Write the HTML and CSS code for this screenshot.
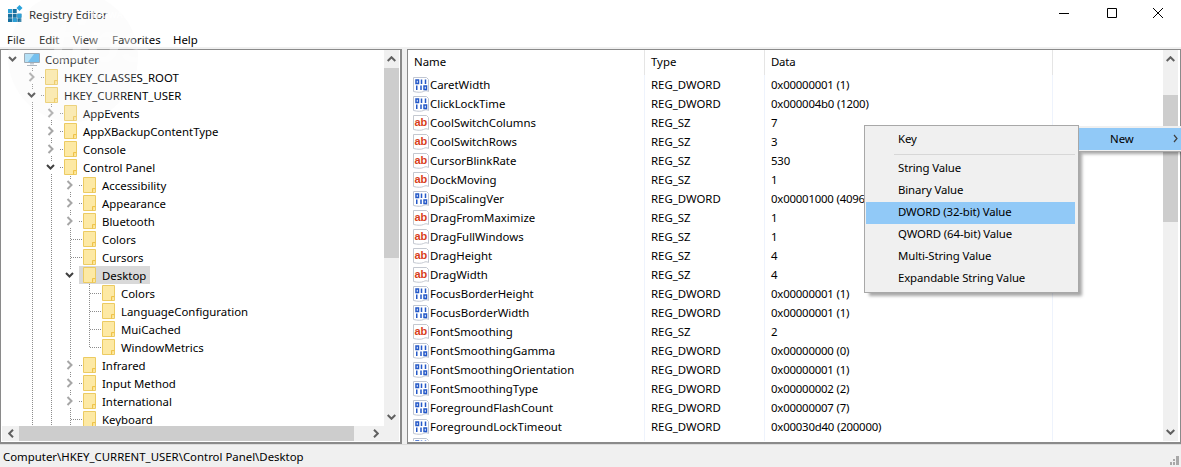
FILE: index.html
```html
<!DOCTYPE html>
<html lang="en">
<head>
<meta charset="utf-8">
<title>Registry Editor</title>
<link rel="stylesheet" href="styles.css">
</head>
<body>
<svg class="defs" width="0" height="0" aria-hidden="true">
  <symbol id="open" viewBox="0 0 15 12"><path d="M4 4l3.500 3.500L11 4" fill="none" stroke="#404040" stroke-width="2"/></symbol>
  <symbol id="closed" viewBox="0 0 15 12"><path d="M5.500 2l4 4-4 4" fill="none" stroke="#a6a6a6" stroke-width="2"/></symbol>
  <symbol id="folder" viewBox="0 0 13 16"><path d="M.5.500h12v15H.5z" fill="#fde9a4" stroke="#eccb62"/><path d="M9.500 15.500v-4h3" fill="#fde08a" stroke="#eec34a"/></symbol>
  <symbol id="dword" viewBox="0 0 16 16"><path d="M.5 .5h13l2 2v12c-2-1-3-1-5 0s-6 1-10 0z" fill="#fff" stroke="#c0c6d2"/><g fill="none" stroke="#2458c8" stroke-width="1.500"><path d="M3 3h2.500v3.500H3zM11 9h2.500v3.500H11z"/><path d="M8.500 2.500v4.500M12.500 2.500v4.500M3.750 8.500v4.500M8 8.500v4.500"/></g></symbol>
  <symbol id="sz" viewBox="0 0 16 16"><path d="M.5 .5h13l2 2v12c-2-1-3-1-5 0s-6 1-10 0z" fill="#fff" stroke="#c4c8d0"/><text x="1.500" y="11" class="ab">ab</text></symbol>
</svg>

<div class="window">
  <header class="titlebar">
    <svg class="appicon" width="15" height="17" viewBox="0 0 15 17"><path d="M0 4h4v4H0zM4.700 4h4v4h-4zM0 8.700h4v4H0zM4.700 8.700h4v4h-4zM9.400 8.700h4v4h-4zM0 13.300h4v3.700H0zM4.700 13.300h4v3.700h-4zM9.400 13.300h4v3.700h-4z" fill="#17709f"/><path d="M0 4h4v4H0zM9.400 8.700h4v4h-4zM4.700 13.300h4v3.700h-4z" fill="#2b9fd6"/><path d="M11.500 0l3 3-3 3-3-3z" fill="#2aa3dc"/></svg>
    <span class="title">Registry Editor</span>
    <span class="controls">
      <svg width="46" height="28" viewBox="0 0 46 28"><path d="M16 13.500h10" stroke="#000"/></svg>
      <svg width="46" height="28" viewBox="0 0 46 28"><path d="M18.500 8.500h9v9h-9z" fill="none" stroke="#000"/></svg>
      <svg width="46" height="28" viewBox="0 0 46 28"><path d="M18 8l10 10M28 8L18 18" stroke="#000" fill="none"/></svg>
    </span>
  </header>
  <nav class="menubar"><span class="m-file">File</span><span class="m-edit">Edit</span><span class="m-view">View</span><span class="m-fav">Favorites</span><span>Help</span></nav>

  <main class="panes">
    <section class="pane left">
      <div class="left-top">
        <div class="tree">
          <div class="row"><span class="exp"><svg class="chev"><use href="#open"/></svg></span><span class="node root"><svg class="pc" width="16" height="13" viewBox="0 0 16 13"><path d="M.5.500h15v9H.5z" fill="#e8f4fc" stroke="#8a9aa8"/><path d="M1 1h14v8H1z" fill="#57b5ee"/><path d="M1 1h9L4 9H1z" fill="#a5dcf8"/><path d="M6 10h4v1.500H6z" fill="#b8c2cc"/><path d="M3 12h10v1H3z" fill="#9aa6b2"/></svg><span>Computer</span></span></div>

          <div class="row"><span class="ind"></span><span class="exp line"><svg class="chev"><use href="#closed"/></svg></span><span class="node"><svg class="fd"><use href="#folder"/></svg><span>HKEY_CLASSES_ROOT</span></span></div>
          <div class="row"><span class="ind"></span><span class="exp line"><svg class="chev"><use href="#open"/></svg></span><span class="node"><svg class="fd"><use href="#folder"/></svg><span>HKEY_CURRENT_USER</span></span></div>

          <div class="row"><span class="ind"></span><span class="ind line"></span><span class="exp line"><svg class="chev"><use href="#closed"/></svg></span><span class="node"><svg class="fd"><use href="#folder"/></svg><span>AppEvents</span></span></div>
          <div class="row"><span class="ind"></span><span class="ind line"></span><span class="exp line"><svg class="chev"><use href="#closed"/></svg></span><span class="node"><svg class="fd"><use href="#folder"/></svg><span>AppXBackupContentType</span></span></div>
          <div class="row"><span class="ind"></span><span class="ind line"></span><span class="exp line"><svg class="chev"><use href="#closed"/></svg></span><span class="node"><svg class="fd"><use href="#folder"/></svg><span>Console</span></span></div>
          <div class="row"><span class="ind"></span><span class="ind line"></span><span class="exp line"><svg class="chev"><use href="#open"/></svg></span><span class="node"><svg class="fd"><use href="#folder"/></svg><span>Control Panel</span></span></div>

          <div class="row"><span class="ind"></span><span class="ind line"></span><span class="ind line"></span><span class="exp line"><svg class="chev"><use href="#closed"/></svg></span><span class="node"><svg class="fd"><use href="#folder"/></svg><span>Accessibility</span></span></div>
          <div class="row"><span class="ind"></span><span class="ind line"></span><span class="ind line"></span><span class="exp line"><svg class="chev"><use href="#closed"/></svg></span><span class="node"><svg class="fd"><use href="#folder"/></svg><span>Appearance</span></span></div>
          <div class="row"><span class="ind"></span><span class="ind line"></span><span class="ind line"></span><span class="exp line"><svg class="chev"><use href="#closed"/></svg></span><span class="node"><svg class="fd"><use href="#folder"/></svg><span>Bluetooth</span></span></div>
          <div class="row"><span class="ind"></span><span class="ind line"></span><span class="ind line"></span><span class="exp line leaf"></span><span class="node"><svg class="fd"><use href="#folder"/></svg><span>Colors</span></span></div>
          <div class="row"><span class="ind"></span><span class="ind line"></span><span class="ind line"></span><span class="exp line leaf"></span><span class="node"><svg class="fd"><use href="#folder"/></svg><span>Cursors</span></span></div>
          <div class="row"><span class="ind"></span><span class="ind line"></span><span class="ind line"></span><span class="exp line"><svg class="chev"><use href="#open"/></svg></span><span class="node selected"><svg class="fd"><use href="#folder"/></svg><span>Desktop</span></span></div>

          <div class="row"><span class="ind"></span><span class="ind line"></span><span class="ind line"></span><span class="ind line"></span><span class="exp line leaf"></span><span class="node"><svg class="fd"><use href="#folder"/></svg><span>Colors</span></span></div>
          <div class="row"><span class="ind"></span><span class="ind line"></span><span class="ind line"></span><span class="ind line"></span><span class="exp line leaf"></span><span class="node"><svg class="fd"><use href="#folder"/></svg><span>LanguageConfiguration</span></span></div>
          <div class="row"><span class="ind"></span><span class="ind line"></span><span class="ind line"></span><span class="ind line"></span><span class="exp line leaf"></span><span class="node"><svg class="fd"><use href="#folder"/></svg><span>MuiCached</span></span></div>
          <div class="row"><span class="ind"></span><span class="ind line"></span><span class="ind line"></span><span class="ind line"></span><span class="exp line leaf end"></span><span class="node"><svg class="fd"><use href="#folder"/></svg><span>WindowMetrics</span></span></div>

          <div class="row"><span class="ind"></span><span class="ind line"></span><span class="ind line"></span><span class="exp line"><svg class="chev"><use href="#closed"/></svg></span><span class="node"><svg class="fd"><use href="#folder"/></svg><span>Infrared</span></span></div>
          <div class="row"><span class="ind"></span><span class="ind line"></span><span class="ind line"></span><span class="exp line"><svg class="chev"><use href="#closed"/></svg></span><span class="node"><svg class="fd"><use href="#folder"/></svg><span>Input Method</span></span></div>
          <div class="row"><span class="ind"></span><span class="ind line"></span><span class="ind line"></span><span class="exp line"><svg class="chev"><use href="#closed"/></svg></span><span class="node"><svg class="fd"><use href="#folder"/></svg><span>International</span></span></div>
          <div class="row"><span class="ind"></span><span class="ind line"></span><span class="ind line"></span><span class="exp line leaf"></span><span class="node"><svg class="fd"><use href="#folder"/></svg><span>Keyboard</span></span></div>
        </div>
        <div class="vscroll">
          <span class="sb-btn"><svg width="9" height="6" viewBox="0 0 9 6"><path d="M.7 5l3.800-3.800L8.300 5" fill="none" stroke="#606060" stroke-width="2"/></svg></span>
          <span class="thumb tree-thumb"></span>
          <span class="sb-fill"></span>
          <span class="sb-btn"><svg width="9" height="6" viewBox="0 0 9 6"><path d="M.7 1l3.800 3.800L8.300 1" fill="none" stroke="#606060" stroke-width="2"/></svg></span>
        </div>
      </div>
      <div class="hscroll">
        <span class="hb-btn"><svg width="6" height="9" viewBox="0 0 6 9"><path d="M5 .7L1.200 4.500 5 8.300" fill="none" stroke="#606060" stroke-width="2"/></svg></span>
        <span class="hthumb"></span>
        <span class="sb-fill"></span>
        <span class="hb-btn"><svg width="6" height="9" viewBox="0 0 6 9"><path d="M1 .7l3.800 3.800L1 8.300" fill="none" stroke="#606060" stroke-width="2"/></svg></span>
        <span class="corner"></span>
      </div>
    </section>

    <section class="pane right">
      <div class="list">
        <div class="lrow head"><span class="c1">Name</span><span class="c2">Type</span><span class="c3">Data</span><span class="c4"></span></div>
        <div class="lrow"><span class="c1"><svg class="ic"><use href="#dword"/></svg>CaretWidth</span><span class="c2">REG_DWORD</span><span class="c3">0x00000001 (1)</span><span class="c4"></span></div>
        <div class="lrow"><span class="c1"><svg class="ic"><use href="#dword"/></svg>ClickLockTime</span><span class="c2">REG_DWORD</span><span class="c3">0x000004b0 (1200)</span><span class="c4"></span></div>
        <div class="lrow"><span class="c1"><svg class="ic"><use href="#sz"/></svg>CoolSwitchColumns</span><span class="c2">REG_SZ</span><span class="c3">7</span><span class="c4"></span></div>
        <div class="lrow"><span class="c1"><svg class="ic"><use href="#sz"/></svg>CoolSwitchRows</span><span class="c2">REG_SZ</span><span class="c3">3</span><span class="c4"></span></div>
        <div class="lrow"><span class="c1"><svg class="ic"><use href="#sz"/></svg>CursorBlinkRate</span><span class="c2">REG_SZ</span><span class="c3">530</span><span class="c4"></span></div>
        <div class="lrow"><span class="c1"><svg class="ic"><use href="#sz"/></svg>DockMoving</span><span class="c2">REG_SZ</span><span class="c3">1</span><span class="c4"></span></div>
        <div class="lrow"><span class="c1"><svg class="ic"><use href="#dword"/></svg>DpiScalingVer</span><span class="c2">REG_DWORD</span><span class="c3">0x00001000 (4096)</span><span class="c4"></span></div>
        <div class="lrow"><span class="c1"><svg class="ic"><use href="#sz"/></svg>DragFromMaximize</span><span class="c2">REG_SZ</span><span class="c3">1</span><span class="c4"></span></div>
        <div class="lrow"><span class="c1"><svg class="ic"><use href="#sz"/></svg>DragFullWindows</span><span class="c2">REG_SZ</span><span class="c3">1</span><span class="c4"></span></div>
        <div class="lrow"><span class="c1"><svg class="ic"><use href="#sz"/></svg>DragHeight</span><span class="c2">REG_SZ</span><span class="c3">4</span><span class="c4"></span></div>
        <div class="lrow"><span class="c1"><svg class="ic"><use href="#sz"/></svg>DragWidth</span><span class="c2">REG_SZ</span><span class="c3">4</span><span class="c4"></span></div>
        <div class="lrow"><span class="c1"><svg class="ic"><use href="#dword"/></svg>FocusBorderHeight</span><span class="c2">REG_DWORD</span><span class="c3">0x00000001 (1)</span><span class="c4"></span></div>
        <div class="lrow"><span class="c1"><svg class="ic"><use href="#dword"/></svg>FocusBorderWidth</span><span class="c2">REG_DWORD</span><span class="c3">0x00000001 (1)</span><span class="c4"></span></div>
        <div class="lrow"><span class="c1"><svg class="ic"><use href="#sz"/></svg>FontSmoothing</span><span class="c2">REG_SZ</span><span class="c3">2</span><span class="c4"></span></div>
        <div class="lrow"><span class="c1"><svg class="ic"><use href="#dword"/></svg>FontSmoothingGamma</span><span class="c2">REG_DWORD</span><span class="c3">0x00000000 (0)</span><span class="c4"></span></div>
        <div class="lrow"><span class="c1"><svg class="ic"><use href="#dword"/></svg>FontSmoothingOrientation</span><span class="c2">REG_DWORD</span><span class="c3">0x00000001 (1)</span><span class="c4"></span></div>
        <div class="lrow"><span class="c1"><svg class="ic"><use href="#dword"/></svg>FontSmoothingType</span><span class="c2">REG_DWORD</span><span class="c3">0x00000002 (2)</span><span class="c4"></span></div>
        <div class="lrow"><span class="c1"><svg class="ic"><use href="#dword"/></svg>ForegroundFlashCount</span><span class="c2">REG_DWORD</span><span class="c3">0x00000007 (7)</span><span class="c4"></span></div>
        <div class="lrow"><span class="c1"><svg class="ic"><use href="#dword"/></svg>ForegroundLockTimeout</span><span class="c2">REG_DWORD</span><span class="c3">0x00030d40 (200000)</span><span class="c4"></span></div>
        <div class="lrow"><span class="c1"><svg class="ic"><use href="#dword"/></svg>ImageColor</span><span class="c2">REG_DWORD</span><span class="c3">0xc0e7c674 (3236415092)</span><span class="c4"></span></div>
      </div>
      <div class="vscroll">
        <span class="sb-btn"><svg width="9" height="6" viewBox="0 0 9 6"><path d="M.7 5l3.800-3.800L8.300 5" fill="none" stroke="#606060" stroke-width="2"/></svg></span>
        <span class="gap-top"></span>
        <span class="thumb list-thumb"></span>
        <span class="sb-fill"></span>
        <span class="sb-btn"><svg width="9" height="6" viewBox="0 0 9 6"><path d="M.7 1l3.800 3.800L8.300 1" fill="none" stroke="#606060" stroke-width="2"/></svg></span>
      </div>
    </section>
  </main>

  <footer class="status">
    <span class="status-text">Computer\HKEY_CURRENT_USER\Control Panel\Desktop</span>
    <svg class="grip" width="9" height="9" viewBox="0 0 9 9"><path d="M6 0h3v3H6zM3 3h2v2H3zM6 3h3v3H6zM0 6h2v3H0zM3 6h2v3H3zM6 6h3v3H6z" fill="#a8a8a8"/></svg>
  </footer>

  <div class="ctx">
    <div class="ctx-item">Key</div>
    <div class="ctx-sep"></div>
    <div class="ctx-item">String Value</div>
    <div class="ctx-item">Binary Value</div>
    <div class="ctx-item hot">DWORD (32-bit) Value</div>
    <div class="ctx-item">QWORD (64-bit) Value</div>
    <div class="ctx-item">Multi-String Value</div>
    <div class="ctx-item">Expandable String Value</div>
  </div>
  <div class="ctx-new"><span>New</span><svg width="5" height="9" viewBox="0 0 5 9"><path d="M1 1l3 3.500L1 8" fill="none" stroke="#404040" stroke-width="1.200"/></svg></div>

  <div class="mark" aria-hidden="true">
    <div class="mark-disc"></div>
    <span class="mark-brand">THAIWARE</span>
    <span class="mark-tips">tips</span>
  </div>
</div>
</body>
</html>
```

FILE: styles.css
```css
* { box-sizing: border-box; }
html, body { margin: 0; padding: 0; }
body {
  width: 1181px;
  height: 467px;
  overflow: hidden;
  background: #fff;
  color: #000;
  font: 11.4px/18px "Noto Sans", "Open Sans", sans-serif;
}
.defs { display: block; height: 0; }
.ab { font: bold 11px "Liberation Sans", sans-serif; fill: #d8401c; }
.window { position: relative; width: 1181px; height: 467px; display: flex; flex-direction: column; }

.titlebar { height: 28px; display: flex; align-items: center; padding-left: 8px; }
.appicon { margin-right: 6px; margin-top: -1px; }
.title { flex: 1; margin-top: 2px; }
.controls { display: flex; margin-right: 0; align-self: flex-start; }
.controls svg { display: block; }

.menubar { height: 19px; display: flex; padding-left: 7px; padding-top: 3px; }
.m-file { width: 32px; }
.m-edit { width: 34px; }
.m-view { width: 39px; }
.m-fav { width: 61px; }

.panes { height: 397px; display: flex; gap: 5px; padding-top: 2px; background: #f0f0f0; }
.pane { height: 395px; background: #fff; border: 1px solid #8a8a8a; border-bottom-width: 2px; }
.left { width: 402px; padding: 0 1px 1px 0; display: flex; flex-direction: column; border-right-width: 2px; }
.left-top { height: 376px; display: flex; }
.tree { flex: 1; min-width: 0; overflow: hidden; padding-left: 2px; background: #fff; }
.row { height: 18px; display: flex; }
.ind, .exp { width: 19px; flex: none; height: 18px; display: flex; align-items: center; }
.line {
  background: repeating-linear-gradient(to bottom, #8c8c8c 0 1px, transparent 1px 2px) 10px 0 / 1px 100% no-repeat;
}
.chev { display: block; width: 15px; height: 12px; margin-left: 2px; background: #fff; }
.leaf {
  background:
    repeating-linear-gradient(to bottom, #8c8c8c 0 1px, transparent 1px 2px) 10px 0 / 1px 100% no-repeat,
    repeating-linear-gradient(to right, #8c8c8c 0 1px, transparent 1px 2px) 11px 9px / 8px 1px no-repeat;
}
.end {
  background:
    repeating-linear-gradient(to bottom, #8c8c8c 0 1px, transparent 1px 2px) 10px 0 / 1px 9px no-repeat,
    repeating-linear-gradient(to right, #8c8c8c 0 1px, transparent 1px 2px) 11px 9px / 8px 1px no-repeat;
}
.node {
  display: flex;
  align-items: center;
  padding: 0 4px;
  height: 18px;
  white-space: nowrap;
  background: repeating-linear-gradient(to right, #8c8c8c 0 1px, transparent 1px 2px) 0 9px / 3px 1px no-repeat;
}
.node > span { margin-top: 2px; }
.node.root { padding-left: 2px; background: none; }
.node.root .pc { margin-right: 5px; }
.node.selected { background: #d9d9d9; }
.fd { width: 13px; height: 16px; flex: none; margin-right: 6px; }

.vscroll { width: 15px; flex: none; display: flex; flex-direction: column; background: #f0f0f0; }
.sb-btn { height: 18px; flex: none; display: flex; align-items: center; justify-content: center; }
.sb-fill { flex: 1; }
.thumb { flex: none; background: #cdcdcd; display: block; }
.tree-thumb { height: 190px; }
.gap-top { height: 27px; flex: none; }
.list-thumb { height: 127px; }

.hscroll { height: 15px; flex: none; display: flex; background: #f0f0f0; margin-left: 1px; }
.hb-btn { width: 17px; flex: none; display: flex; align-items: center; justify-content: center; }
.hthumb { width: 335px; flex: none; background: #cdcdcd; }
.corner { width: 15px; flex: none; background: #f0f0f0; }

.right { flex: 1; min-width: 0; display: flex; padding: 0 2px 1px 0; }
.list { flex: 1; min-width: 0; overflow: hidden; }
.lrow { height: 19px; display: flex; white-space: nowrap; }
.lrow.head { height: 25px; align-items: stretch; }
.lrow.head span { display: flex; align-items: center; padding-bottom: 1px; border-right: 1px solid #e5e5e5; }
.c1, .c2, .c3 { display: flex; align-items: center; flex: none; padding-left: 6px; border-right: 1px solid #eef3fc; overflow: hidden; }
.c1 { width: 237px; }
.c2 { width: 120px; }
.c3 { width: 288px; letter-spacing: -.2px; }
.lrow.head .c4 { border-right: 0; }
.c4 { flex: 1; }
.lrow .c1 { padding-left: 5px; }
.head.lrow .c1 { padding-left: 6px; }
.ic { width: 16px; height: 16px; flex: none; margin-right: 1px; }

.status { height: 23px; flex: none; display: flex; align-items: center; justify-content: space-between; padding: 0 2px 0 3px; background: #f0f0f0; border-top: 1px solid #dcdcdc; }
.status-text { margin-top: 2px; }
.grip { align-self: flex-end; margin-bottom: 2px; }

.ctx {
  position: absolute;
  left: 864px;
  top: 125px;
  width: 215px;
  height: 168px;
  padding: 3px 3px 3px 1px;
  background: #f0f0f0;
  border: 1px solid #a8a8a8;
  box-shadow: 4px 4px 3px -1px rgba(0, 0, 0, .35);
}
.ctx-item { height: 22px; padding: 0 0 2px 32px; display: flex; align-items: center; letter-spacing: -.12px; }
.ctx-item.hot { background: #91c9f7; }
.ctx-sep { height: 7px; margin-left: 28px; background: linear-gradient(#d7d7d7, #d7d7d7) 0 3px / 100% 1px no-repeat; }
.ctx-new {
  position: absolute;
  left: 1079px;
  top: 126px;
  width: 102px;
  height: 26px;
  padding: 2px 0 2px 31px;
  display: flex;
  align-items: center;
  justify-content: space-between;
  background: linear-gradient(#91c9f7, #91c9f7) 0 2px / 100% 22px no-repeat, #f0f0f0;
  box-shadow: 2px 3px 3px -1px rgba(0, 0, 0, .35);
  border-bottom: 1px solid #a8a8a8;
}
.ctx-new svg { margin-right: 3px; }

.mark { position: absolute; left: 0; top: 0; width: 190px; height: 125px; pointer-events: none; overflow: hidden; }
.mark-disc {
  position: absolute;
  left: 8px;
  top: -8px;
  width: 130px;
  height: 130px;
  border-radius: 50%;
  background: rgba(238, 238, 238, .2);
}
.mark-brand { position: absolute; left: 86px; top: 9px; font: bold 9px/12px "Liberation Sans", sans-serif; color: rgba(255, 255, 255, .9); letter-spacing: .3px; }
.mark-tips { position: absolute; left: 50px; top: 12px; font: italic bold 58px/60px "Liberation Sans", sans-serif; color: rgba(255, 255, 255, .3); }
```
